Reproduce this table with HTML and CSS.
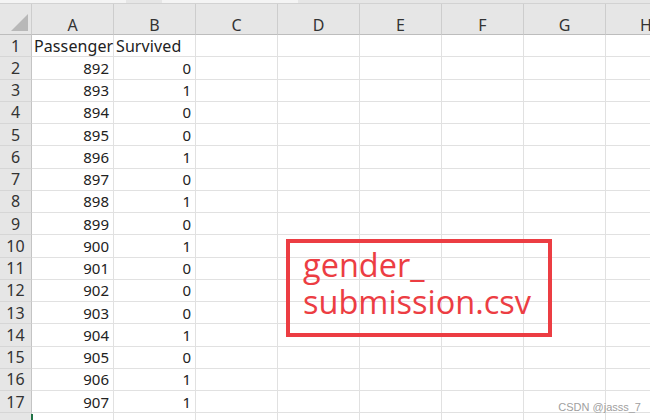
FILE: index.html
```html
<!DOCTYPE html>
<html>
<head>
<meta charset="utf-8">
<link rel="stylesheet" href="styles.css">
</head>
<body>
<div class="sheet">
  <div class="topbar"><span class="tb tb1"></span><span class="tb tb2"></span><span class="tb tb3"></span></div>
  <div class="grid">
    <div class="hd corner"><span class="tri"></span></div>
    <div class="hd col">A</div><div class="hd col">B</div><div class="hd col">C</div><div class="hd col">D</div><div class="hd col">E</div><div class="hd col">F</div><div class="hd col">G</div><div class="hd col last">H</div>

    <div class="rh">1</div><div class="c l">Passenger</div><div class="c l">Survived</div><div class="c"></div><div class="c"></div><div class="c"></div><div class="c"></div><div class="c"></div><div class="c"></div>
    <div class="rh">2</div><div class="c">892</div><div class="c">0</div><div class="c"></div><div class="c"></div><div class="c"></div><div class="c"></div><div class="c"></div><div class="c"></div>
    <div class="rh">3</div><div class="c">893</div><div class="c">1</div><div class="c"></div><div class="c"></div><div class="c"></div><div class="c"></div><div class="c"></div><div class="c"></div>
    <div class="rh">4</div><div class="c">894</div><div class="c">0</div><div class="c"></div><div class="c"></div><div class="c"></div><div class="c"></div><div class="c"></div><div class="c"></div>
    <div class="rh">5</div><div class="c">895</div><div class="c">0</div><div class="c"></div><div class="c"></div><div class="c"></div><div class="c"></div><div class="c"></div><div class="c"></div>
    <div class="rh">6</div><div class="c">896</div><div class="c">1</div><div class="c"></div><div class="c"></div><div class="c"></div><div class="c"></div><div class="c"></div><div class="c"></div>
    <div class="rh">7</div><div class="c">897</div><div class="c">0</div><div class="c"></div><div class="c"></div><div class="c"></div><div class="c"></div><div class="c"></div><div class="c"></div>
    <div class="rh">8</div><div class="c">898</div><div class="c">1</div><div class="c"></div><div class="c"></div><div class="c"></div><div class="c"></div><div class="c"></div><div class="c"></div>
    <div class="rh">9</div><div class="c">899</div><div class="c">0</div><div class="c"></div><div class="c"></div><div class="c"></div><div class="c"></div><div class="c"></div><div class="c"></div>
    <div class="rh">10</div><div class="c">900</div><div class="c">1</div><div class="c"></div><div class="c"></div><div class="c"></div><div class="c"></div><div class="c"></div><div class="c"></div>
    <div class="rh">11</div><div class="c">901</div><div class="c">0</div><div class="c"></div><div class="c"></div><div class="c"></div><div class="c"></div><div class="c"></div><div class="c"></div>
    <div class="rh">12</div><div class="c">902</div><div class="c">0</div><div class="c"></div><div class="c"></div><div class="c"></div><div class="c"></div><div class="c"></div><div class="c"></div>
    <div class="rh">13</div><div class="c">903</div><div class="c">0</div><div class="c"></div><div class="c"></div><div class="c"></div><div class="c"></div><div class="c"></div><div class="c"></div>
    <div class="rh">14</div><div class="c">904</div><div class="c">1</div><div class="c"></div><div class="c"></div><div class="c"></div><div class="c"></div><div class="c"></div><div class="c"></div>
    <div class="rh">15</div><div class="c">905</div><div class="c">0</div><div class="c"></div><div class="c"></div><div class="c"></div><div class="c"></div><div class="c"></div><div class="c"></div>
    <div class="rh">16</div><div class="c">906</div><div class="c">1</div><div class="c"></div><div class="c"></div><div class="c"></div><div class="c"></div><div class="c"></div><div class="c"></div>
    <div class="rh">17</div><div class="c">907</div><div class="c">1</div><div class="c"></div><div class="c"></div><div class="c"></div><div class="c"></div><div class="c"></div><div class="c"></div>
    <div class="rh"></div><div class="c"></div><div class="c"></div><div class="c"></div><div class="c"></div><div class="c"></div><div class="c"></div><div class="c"></div><div class="c"></div>
  </div>
  <span class="sel"></span>
  <div class="note">gender_<br>submission.csv</div>
  <div class="mark">CSDN @jasss_7</div>
</div>
</body>
</html>
```
FILE: styles.css
```css
html, body {
  margin: 0;
  padding: 0;
  background: #ffffff;
  overflow: hidden;
}
.sheet {
  position: relative;
  width: 650px;
  height: 420px;
  overflow: hidden;
  font-family: "Noto Sans", "Liberation Sans", sans-serif;
  color: #222;
}
.topbar {
  height: 3px;
  display: flex;
  background: #e6e6e6;
  border-bottom: 1px solid #d2d2d2;
}
.tb {
  height: 3px;
  background: #f4f4f4;
}
.tb1 { width: 126px; }
.tb2 { width: 36px; background: #e6e6e6; }
.tb3 { width: 136px; }
.grid {
  display: grid;
  grid-template-columns: 32px repeat(7, 82px) 1fr;
  grid-template-rows: 31px repeat(18, 22.25px);
}
.hd {
  background: #e6e6e6;
  border-bottom: 1px solid #bdbdbd;
  box-sizing: border-box;
  font-size: 16px;
  line-height: 20px;
  color: #333;
  display: flex;
  align-items: flex-start;
  justify-content: center;
  padding-top: 11px;
}
.col {
  border-right: 1px solid #cdcdcd;
}
.col.last {
  justify-content: flex-start;
  padding-left: 34px;
  border-right: none;
}
.corner {
  border-right: 1px solid #cdcdcd;
  position: relative;
}
.tri {
  position: absolute;
  right: 3px;
  bottom: 3px;
  width: 0;
  height: 0;
  border-left: 17px solid transparent;
  border-bottom: 17px solid #b8b8b8;
}
.rh {
  background: #e6e6e6;
  border-right: 1px solid #c4c4c4;
  border-bottom: 1px solid #d6d6d6;
  box-sizing: border-box;
  font-size: 16px;
  color: #333;
  display: flex;
  align-items: center;
  justify-content: center;
}
.c {
  border-right: 1px solid #e1e1e1;
  border-bottom: 1px solid #e1e1e1;
  box-sizing: border-box;
  font-size: 15px;
  display: flex;
  align-items: center;
  justify-content: flex-end;
  padding-right: 4px;
  overflow: visible;
  white-space: nowrap;
}
.c.l {
  justify-content: flex-start;
  padding-left: 2px;
  padding-right: 0;
  font-size: 16px;
  letter-spacing: 0.1px;
}
.sel {
  position: absolute;
  left: 31px;
  top: 414px;
  width: 2px;
  height: 6px;
  background: #217346;
}
.note {
  position: absolute;
  left: 286px;
  top: 239px;
  width: 266px;
  height: 98px;
  box-sizing: border-box;
  border: 4px solid #ec3d43;
  color: #ec3d43;
  font-family: "Open Sans", sans-serif;
  font-size: 32.5px;
  line-height: 37px;
  padding: 3px 0 0 13px;
}
.mark {
  position: absolute;
  right: 9px;
  top: 401px;
  font-family: "Liberation Sans", sans-serif;
  font-size: 11px;
  color: #a0a0a0;
}
```
